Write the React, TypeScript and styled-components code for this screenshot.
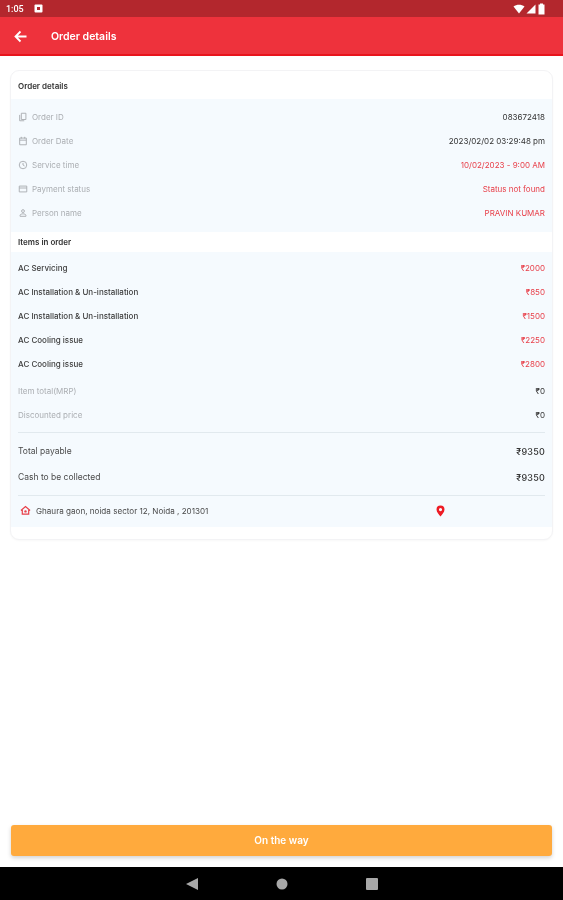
import styled, { createGlobalStyle } from "styled-components";

const GlobalStyle = createGlobalStyle`
    html, body {
        margin: 0;
        padding: 0;
        background: #ffffff;
    }

    body {
        font-family: "Inter", "Roboto", sans-serif;
    }
`;

// the reference is a soft, upscaled capture
const Screen = styled.div`
    width: 563px;
    height: 900px;
    display: flex;
    flex-direction: column;
    overflow: hidden;
    background: #ffffff;
    filter: blur(0.35px);
`;

const StatusBar = styled.div`
    height: 17px;
    flex-shrink: 0;
    display: flex;
    align-items: center;
    justify-content: space-between;
    padding: 0 17px 0 6px;
    background: #b3272d;
    color: #ffffff;
    font-family: "Roboto", sans-serif;
    font-size: 9px;
    font-weight: 500;
`;

const StatusGroup = styled.div`
    display: flex;
    align-items: center;
    gap: 10px;
`;

const StatusIcons = styled.div`
    display: flex;
    align-items: center;
    gap: 1px;
`;

const AppBar = styled.header`
    height: 39px;
    flex-shrink: 0;
    display: flex;
    align-items: center;
    gap: 24px;
    padding: 2px 14px 0;
    box-sizing: border-box;
    background: #ee323c;
    border-bottom: 2px solid #e8141c;
    color: #ffffff;
    font-size: 10.5px;
    font-weight: 600;
`;

const Content = styled.main`
    flex: 1;
    min-height: 0;
    padding: 14px 10px 0;
`;

const Card = styled.section`
    height: 470px;
    box-sizing: border-box;
    display: flex;
    flex-direction: column;
    border: 1px solid #f3f3f5;
    border-radius: 9px;
    overflow: hidden;
    background: #ffffff;
    box-shadow: 0 1px 2px rgba(0, 0, 0, 0.03);
`;

const SectionTitle = styled.h2<{ $height: number; $nudge: number }>`
    height: ${({ $height }) => $height}px;
    margin: 0;
    flex-shrink: 0;
    display: flex;
    align-items: center;
    box-sizing: border-box;
    padding: ${({ $nudge }) => $nudge}px 0 0 7px;
    color: #333333;
    font-size: 8px;
    font-weight: 600;
`;

const Panel = styled.div`
    display: flex;
    flex-direction: column;
    box-sizing: border-box;
    background: #f5fafe;
`;

const DetailsPanel = styled(Panel)`
    height: 133px;
    padding-top: 6px;
`;

const ItemsPanel = styled(Panel)`
    height: 275px;
    padding-top: 4px;
`;

const Row = styled.div<{ $height: number }>`
    height: ${({ $height }) => $height}px;
    flex-shrink: 0;
    display: flex;
    align-items: center;
    justify-content: space-between;
    padding: 0 7px;
`;

const Label = styled.span<{ $tone: "muted" | "dark" | "strong" }>`
    display: flex;
    align-items: center;
    gap: 4px;
    font-size: ${({ $tone }) => ($tone === "strong" ? "8.5px" : "8px")};
    font-weight: ${({ $tone }) => ($tone === "dark" ? 500 : 400)};
    color: ${({ $tone }) =>
        $tone === "muted"
            ? "#abaeb2"
            : $tone === "strong"
              ? "#4a4a4a"
              : "#3c3c3c"};
`;

const Value = styled.span<{ $tone: "dark" | "red" | "strong" }>`
    font-size: ${({ $tone }) => ($tone === "strong" ? "9px" : "8px")};
    font-weight: ${({ $tone }) => ($tone === "strong" ? 500 : 400)};
    letter-spacing: ${({ $tone }) => ($tone === "strong" ? "0.2px" : "0")};
    color: ${({ $tone }) => ($tone === "red" ? "#e8404a" : "#333333")};
`;

const Divider = styled.hr<{ $top: number }>`
    height: 1px;
    flex-shrink: 0;
    margin: ${({ $top }) => $top}px 7px 0;
    border: 0;
    background: #e1e9ee;
`;

const AddressRow = styled.div`
    height: 29px;
    flex-shrink: 0;
    display: grid;
    grid-template-columns: 416px 16px;
    align-items: center;
    padding-left: 9px;
`;

const AddressText = styled.span`
    display: flex;
    align-items: center;
    gap: 5px;
    color: #4a4a4a;
    font-size: 8.1px;
`;

const Footer = styled.div`
    flex-shrink: 0;
    padding: 0 11px 11px;
`;

const ActionButton = styled.button`
    width: 100%;
    height: 31px;
    display: block;
    padding: 0 0 2px;
    border: 0;
    border-radius: 3px;
    background: #ffaa3d;
    box-shadow: 0 2px 4px rgba(0, 0, 0, 0.18);
    color: #ffffff;
    font-family: inherit;
    font-size: 10px;
    font-weight: 600;
`;

const NavBar = styled.nav`
    height: 33px;
    flex-shrink: 0;
    display: flex;
    align-items: center;
    justify-content: center;
    gap: 78px;
    background: #000000;
`;

const details = [
    {
        label: "Order ID",
        value: "083672418",
        tone: "dark",
        icon: <path d="M4 1.5h5.5v7.5H4zM2 3.5v7h5.5" />,
    },
    {
        label: "Order Date",
        value: "2023/02/02 03:29:48 pm",
        tone: "dark",
        icon: <path d="M2 2.5h8v8H2zM2 5h8M4 1v2M8 1v2" />,
    },
    {
        label: "Service time",
        value: "10/02/2023 - 9:00 AM",
        tone: "red",
        icon: <path d="M6 1.5a4.5 4.5 0 1 0 0 9a4.5 4.5 0 0 0 0-9zM6 3.5V6l1.8 1" />,
    },
    {
        label: "Payment status",
        value: "Status not found",
        tone: "red",
        icon: <path d="M1.5 2.5h9v7h-9zM1.5 4.8h9" />,
    },
    {
        label: "Person name",
        value: "PRAVIN KUMAR",
        tone: "red",
        icon: <path d="M6 2a1.7 1.7 0 1 0 0 3.4A1.7 1.7 0 0 0 6 2zM2.5 10V8.8C2.5 7.6 4.5 7 6 7s3.5.6 3.5 1.8V10z" />,
    },
] as const;

const items = [
    ["AC Servicing", "₹2000"],
    ["AC Installation & Un-installation", "₹850"],
    ["AC Installation & Un-installation", "₹1500"],
    ["AC Cooling issue", "₹2250"],
    ["AC Cooling issue", "₹2800"],
];

export default function App() {
    return (
        <Screen>
            <GlobalStyle />

            <StatusBar>
                <StatusGroup>
                    <span>1:05</span>
                    <svg width="9" height="9" viewBox="0 0 9 9">
                        <rect x="0.5" y="0.5" width="8" height="8" rx="1" fill="#ffffff" />
                        <rect x="3" y="3" width="3" height="3" fill="#b3272d" />
                    </svg>
                </StatusGroup>

                <StatusIcons>
                    <svg width="12" height="10" viewBox="0 0 12 10">
                        <path d="M0.5 2.5C3.5 0 8.5 0 11.5 2.5L6 9.5z" fill="#ffffff" />
                    </svg>
                    <svg width="10" height="10" viewBox="0 0 10 10">
                        <path d="M9.5 0.5V9.5H0.5z" fill="#ffffff" />
                    </svg>
                    <svg width="9" height="12" viewBox="0 0 9 12">
                        <path d="M3 0.5h3v1h1.5v10h-6v-10H3z" fill="#ffffff" />
                    </svg>
                </StatusIcons>
            </StatusBar>

            <AppBar>
                <svg width="13" height="13" viewBox="0 0 13 13" fill="none" stroke="#ffffff" strokeWidth="1.8">
                    <path d="M12.5 6.5H1.5M6.5 1.5l-5 5l5 5" />
                </svg>
                <span>Order details</span>
            </AppBar>

            <Content>
                <Card>
                    <SectionTitle $height={28} $nudge={1}>Order details</SectionTitle>

                    <DetailsPanel>
                        {details.map((row) => (
                            <Row key={row.label} $height={24}>
                                <Label $tone="muted">
                                    <svg width="10" height="10" viewBox="0 0 12 12" fill="none" stroke="#a9acb0" strokeWidth="1.1">
                                        {row.icon}
                                    </svg>
                                    {row.label}
                                </Label>
                                <Value $tone={row.tone}>{row.value}</Value>
                            </Row>
                        ))}
                    </DetailsPanel>

                    <SectionTitle $height={20} $nudge={0}>Items in order</SectionTitle>

                    <ItemsPanel>
                        {items.map(([name, price], index) => (
                            <Row key={index} $height={24}>
                                <Label $tone="dark">{name}</Label>
                                <Value $tone="red">{price}</Value>
                            </Row>
                        ))}
                        <Row $height={30}>
                            <Label $tone="muted">Item total(MRP)</Label>
                            <Value $tone="dark">₹0</Value>
                        </Row>
                        <Row $height={18}>
                            <Label $tone="muted">Discounted price</Label>
                            <Value $tone="dark">₹0</Value>
                        </Row>
                        <Divider $top={8} />
                        <Row $height={36}>
                            <Label $tone="strong">Total payable</Label>
                            <Value $tone="strong">₹9350</Value>
                        </Row>
                        <Row $height={16}>
                            <Label $tone="strong">Cash to be collected</Label>
                            <Value $tone="strong">₹9350</Value>
                        </Row>
                        <Divider $top={10} />
                        <AddressRow>
                            <AddressText>
                                <svg width="11" height="11" viewBox="0 0 12 11" fill="none" stroke="#e8404a" strokeWidth="1.3">
                                    <path d="M1 5.5L6 1.2l5 4.3M2.5 5v4.5h7V5" />
                                    <circle cx="6" cy="6.5" r="1.3" fill="#e8404a" stroke="none" />
                                </svg>
                                Ghaura gaon, noida sector 12, Noida , 201301
                            </AddressText>
                            <svg width="9" height="12" viewBox="0 0 9 12">
                                <path
                                    fillRule="evenodd"
                                    d="M4.5 0.5a4 4 0 0 1 4 4c0 2.5-2.5 5.2-4 7c-1.5-1.8-4-4.500-4-7a4 4 0 0 1 4-4zM4.5 3a1.6 1.6 0 1 0 0 3.2a1.6 1.6 0 0 0 0-3.2z"
                                    fill="#ee1c25"
                                />
                            </svg>
                        </AddressRow>
                    </ItemsPanel>
                </Card>
            </Content>

            <Footer>
                <ActionButton>On the way</ActionButton>
            </Footer>

            <NavBar>
                <svg width="12" height="12" viewBox="0 0 12 12">
                    <path d="M12 0V12L0 6z" fill="#a8a8a8" />
                </svg>
                <svg width="12" height="12" viewBox="0 0 12 12">
                    <circle cx="6" cy="6" r="5.5" fill="#a8a8a8" />
                </svg>
                <svg width="12" height="12" viewBox="0 0 12 12">
                    <rect width="12" height="12" rx="1" fill="#a8a8a8" />
                </svg>
            </NavBar>
        </Screen>
    );
}
